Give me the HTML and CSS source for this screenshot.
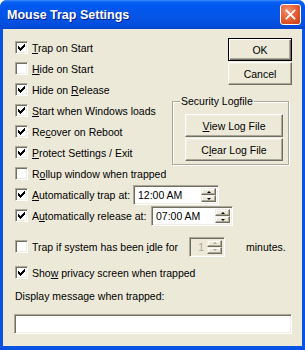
FILE: index.html
```html
<!DOCTYPE html>
<html>
<head>
<meta charset="utf-8">
<link rel="stylesheet" href="styles.css">
</head>
<body>
<div class="window">
  <div class="titlebar">
    <span class="title">Mouse Trap Settings</span>
    <span class="close"><svg width="21" height="21" viewBox="0 0 21 21"><path d="M6 6L15 15M15 6L6 15" stroke="#fff" stroke-width="2" stroke-linecap="square"/></svg></span>
  </div>
  <div class="client">
    <div class="top">
      <div class="checks">
        <div class="row"><span class="cb on"></span><span><u>T</u>rap on Start</span></div>
        <div class="row"><span class="cb"></span><span><u>H</u>ide on Start</span></div>
        <div class="row"><span class="cb on"></span><span>Hide on <u>R</u>elease</span></div>
        <div class="row"><span class="cb on"></span><span><u>S</u>tart when Windows loads</span></div>
        <div class="row"><span class="cb on"></span><span>Re<u>c</u>over on Reboot</span></div>
        <div class="row"><span class="cb on"></span><span><u>P</u>rotect Settings / Exit</span></div>
        <div class="row"><span class="cb"></span><span>R<u>o</u>llup window when trapped</span></div>
      </div>
      <div class="side">
        <div class="btn default">OK</div>
        <div class="btn cancel">Cancel</div>
        <div class="group">
          <span class="legend">Security Logfile</span>
          <div class="btn wide"><u>V</u>iew Log File</div>
          <div class="btn wide second">C<u>l</u>ear Log File</div>
        </div>
      </div>
    </div>
    <div class="row"><span class="cb on"></span><span class="lbl lbl-trap"><u>A</u>utomatically trap at:</span>
      <span class="field time-trap"><span class="val">12:00 AM</span><span class="spin"><span class="sb"><i class="up"></i></span><span class="sb"><i class="dn"></i></span></span></span>
    </div>
    <div class="row"><span class="cb on"></span><span class="lbl lbl-rel">A<u>u</u>tomatically release at:</span>
      <span class="field time-rel"><span class="val">07:00 AM</span><span class="spin"><span class="sb"><i class="up"></i></span><span class="sb"><i class="dn"></i></span></span></span>
    </div>
    <div class="row idle"><span class="cb"></span><span class="lbl lbl-idle">Trap if system has been <u>i</u>dle for</span>
      <span class="field idlebox disabled"><span class="val num">1</span><span class="spin"><span class="sb"><i class="up"></i></span><span class="sb"><i class="dn"></i></span></span></span>
      <span class="minutes">minutes.</span>
    </div>
    <div class="row privacy"><span class="cb on"></span><span>Sho<u>w</u> privacy screen when trapped</span></div>
    <div class="msglabel">Display message when trapped:</div>
    <div class="field msg"></div>
  </div>
</div>
</body>
</html>
```
FILE: styles.css
```css
html, body { margin: 0; padding: 0; background: #fff; }
body { font-family: "Liberation Sans", Arial, sans-serif; font-size: 10.5px; color: #000; }
u { text-decoration: underline; text-underline-offset: 1px; }

.window {
  width: 305px; height: 350px;
  display: flex; flex-direction: column;
  background: #0753E3;
  border-radius: 7px 7px 0 0;
  box-sizing: border-box;
}
.titlebar {
  height: 29px; flex: none;
  display: flex; align-items: center;
  padding: 0 4px 0 7px;
  border-radius: 7px 7px 0 0;
  background: linear-gradient(#3A8CFF 0, #0A62F2 2px, #0058EE 6px, #0554E6 18px, #024CDB 26px, #0143CC 29px);
}
.title {
  color: #fff; font-weight: bold; font-size: 12.5px;
  font-family: "Liberation Sans", Arial, sans-serif;
  text-shadow: 1px 1px #0A1E8C;
  flex: 1;
}
.close {
  width: 21px; height: 21px; box-sizing: border-box;
  border: 1px solid #fff; border-radius: 3px;
  background: radial-gradient(circle at 35% 30%, #F0936F 0, #E3582E 55%, #C43A12 100%);
  display: flex;
}
.close svg { width: 19px; height: 19px; }

.client {
  flex: 1;
  margin: 0 3px 4px 3px;
  background: #ECE9D8;
  padding: 8px 10px 0 12px;
}

.top { display: flex; height: 147px; }
.checks { display: flex; flex-direction: column; }
.row { height: 21px; display: flex; align-items: center; white-space: nowrap; }

.cb {
  width: 13px; height: 13px; flex: none; box-sizing: border-box;
  margin-right: 4px;
  background: #fff;
  border: 1px solid; border-color: #ACA899 #fff #fff #ACA899;
  box-shadow: inset 1px 1px #716F64, inset -1px -1px #F1EFE2;
}
.cb.on {
  background: #fff url("data:image/svg+xml;utf8,<svg xmlns='http://www.w3.org/2000/svg' width='11' height='11'><path d='M8 2h1v1h-1zM7 3h2v1h-2zM2 4h1v1h-1zM6 4h3v1h-3zM2 5h2v1h-2zM5 5h3v1h-3zM2 6h5v1h-5zM3 7h3v1h-3zM4 8h1v1h-1z' fill='black'/></svg>") no-repeat 0 0;
}

.side {
  margin-left: auto; width: 120px;
  display: flex; flex-direction: column; align-items: flex-end;
  padding-top: 1px;
}
.btn {
  width: 64px; height: 23px; box-sizing: border-box;
  display: flex; align-items: center; justify-content: center;
  background: #ECE9D8;
  border: 1px solid; border-color: #fff #716F64 #716F64 #fff;
  box-shadow: inset -1px -1px #ACA899, inset 1px 1px #F1EFE2;
}
.btn.default {
  border: 1px solid #000;
  box-shadow: inset 1px 1px #fff, inset -1px -1px #716F64, inset -2px -2px #ACA899;
}
.btn.cancel { margin-top: 1px; }
.group {
  position: relative;
  margin-top: 16px; margin-right: 3px;
  width: 117px; height: 64px; box-sizing: border-box;
  border: 1px solid #ACA899;
  box-shadow: inset 1px 1px #fff, 1px 1px #fff;
  padding: 12px 0 0 12px;
}
.legend {
  position: absolute; top: -7px; left: 7px;
  background: #ECE9D8; padding: 0 1px; line-height: 13px;
}
.btn.wide { width: 98px; }
.btn.second { margin-top: 1px; }

.lbl { display: inline-block; }
.lbl-trap { width: 101px; }
.lbl-rel { width: 119px; }
.lbl-idle { width: 157px; }

.field {
  height: 20px; box-sizing: border-box;
  background: #fff;
  border: 1px solid; border-color: #ACA899 #fff #fff #ACA899;
  box-shadow: inset 1px 1px #716F64, inset -1px -1px #F1EFE2;
  display: flex; align-items: stretch;
  padding: 2px;
}
.time-trap { width: 86px; margin-top: 1px; }
.time-rel { width: 82px; margin-top: 1px; }
.val { flex: 1; display: flex; align-items: center; padding-left: 2px; }
.spin { width: 15px; display: flex; flex-direction: column; }
.sb {
  flex: 1; box-sizing: border-box;
  background: #ECE9D8;
  border: 1px solid; border-color: #F1EFE2 #716F64 #716F64 #F1EFE2;
  box-shadow: inset -1px -1px #ACA899, inset 1px 1px #fff;
  display: flex; align-items: center; justify-content: center;
}
.up, .dn { width: 0; height: 0; border-left: 2px solid transparent; border-right: 2px solid transparent; }
.up { border-bottom: 2px solid #000; }
.dn { border-top: 2px solid #000; }

.idle { margin-top: 10px; }
.idlebox { width: 36px; background: #ECE9D8; }
.idlebox .num { justify-content: flex-end; padding-right: 3px; color: #ACA899; }
.disabled .up { border-bottom-color: #ACA899; }
.disabled .dn { border-top-color: #ACA899; }
.minutes { margin-left: 21px; }

.privacy { margin-top: 5px; }
.msglabel { margin-top: 7px; height: 13px; line-height: 13px; }
.field.msg { margin-top: 11px; margin-left: -1px; width: 278px; }
```
